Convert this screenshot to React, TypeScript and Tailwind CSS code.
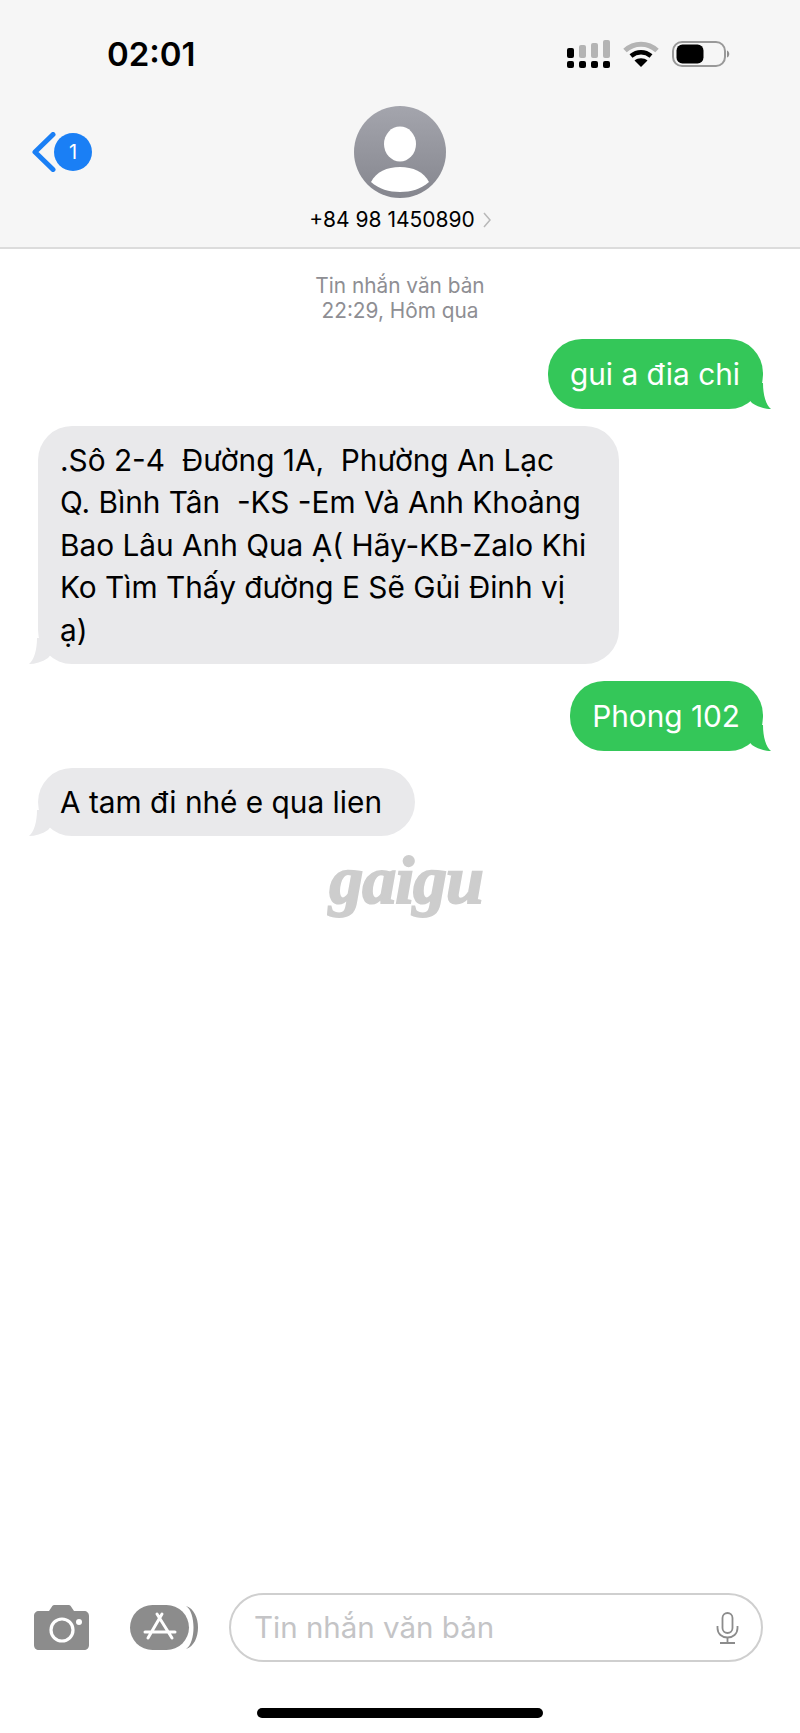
const FONT = "font-['Inter','Liberation_Sans',sans-serif]";

function SignalIcon() {
  return (
    <svg width="43" height="28" viewBox="0 0 43 28">
      <rect x="0" y="8" width="7" height="10" rx="2" fill="#000" />
      <rect x="12" y="5" width="7" height="13" rx="2" fill="#b4b4b4" />
      <rect x="24" y="3" width="7" height="15" rx="2" fill="#b4b4b4" />
      <rect x="36" y="0" width="7" height="18" rx="2" fill="#b4b4b4" />
      <rect x="0" y="21" width="7" height="7" rx="2" fill="#000" />
      <rect x="12" y="21" width="7" height="7" rx="2" fill="#000" />
      <rect x="24" y="21" width="7" height="7" rx="2" fill="#000" />
      <rect x="36" y="21" width="7" height="7" rx="2" fill="#000" />
    </svg>
  );
}

function WifiIcon() {
  return (
    <svg width="36" height="26" viewBox="0 0 36 26" fill="none" strokeLinecap="butt">
      <path d="M2 9.500C11 1 25 1 34 9.500" stroke="#b4b4b4" strokeWidth="5" />
      <path d="M8 15C14 10 22 10 28 15" stroke="#000" strokeWidth="4.500" />
      <path d="M18 26L11.500 19.500C15 16.500 21 16.500 24.500 19.500Z" fill="#000" />
    </svg>
  );
}

function BatteryIcon() {
  return (
    <svg width="58" height="26" viewBox="0 0 58 26">
      <rect x="1" y="1" width="52" height="24" rx="9" fill="none" stroke="#999999" strokeWidth="2" />
      <rect x="4.500" y="3.500" width="27" height="19" rx="6" fill="#000" />
      <path d="M55 9.500C58 10.500 58 15.500 55 16.500Z" fill="#8f8f8f" />
    </svg>
  );
}

function PersonAvatar() {
  return (
    <svg width="92" height="92" viewBox="0 0 92 92">
      <defs>
        <linearGradient id="avatar" x1="0" y1="0" x2="0" y2="1">
          <stop offset="0" stopColor="#a4a5ad" />
          <stop offset="1" stopColor="#85868e" />
        </linearGradient>
      </defs>
      <circle cx="46" cy="46" r="46" fill="url(#avatar)" />
      <ellipse cx="46" cy="38" rx="16" ry="17.500" fill="#fff" />
      <path d="M17 76C22 66 33 61 46 61C59 61 70 66 75 76C67 83 57 86 46 86C35 86 25 83 17 76Z" fill="#fff" />
    </svg>
  );
}

function CameraIcon() {
  return (
    <svg width="55" height="45" viewBox="0 0 55 45">
      <path
        d="M5 6H15L18 1.500C18.500 .5 19.500 0 20.500 0H34.500C35.500 0 36.500 .5 37 1.500L40 6H50C53 6 55 8 55 11V40C55 43 53 45 50 45H5C2 45 0 43 0 40V11C0 8 2 6 5 6Z"
        fill="#8c8c8c"
      />
      <circle cx="28" cy="25" r="11" fill="none" stroke="#fff" strokeWidth="3.200" />
      <circle cx="45" cy="17" r="3" fill="#fff" />
    </svg>
  );
}

function AppsIcon() {
  return (
    <svg width="68" height="45" viewBox="0 0 68 45" fill="none">
      <path d="M56 1C72 6 72 39 56 44C66 38 66 7 56 1Z" fill="#8c8c8c" />
      <rect x="0" y="0" width="59" height="45" rx="22.500" fill="#8c8c8c" />
      <path d="M27 9L42 33M32 9L18 33M15 27H45" stroke="#fff" strokeWidth="3" strokeLinecap="round" />
    </svg>
  );
}

function MicIcon() {
  return (
    <svg width="23" height="32" viewBox="0 0 23 32" fill="none" stroke="#8c8c8c" strokeWidth="1.800">
      <rect x="6.500" y="1" width="10" height="20" rx="5" />
      <path d="M1.500 14V16C1.500 22 6 25.500 11.500 25.500C17 25.500 21.500 22 21.500 16V14" />
      <path d="M11.500 25.500V31M4 31H19" />
    </svg>
  );
}

function Tail({ side, color }: { side: 'left' | 'right'; color: string }) {
  const place = side === 'right' ? 'right-[-8px]' : 'left-[-9px] -scale-x-100';
  return (
    <svg className={`absolute bottom-0 ${place}`} width="30" height="26" viewBox="0 0 30 26">
      <path d="M6 0L22 0C22 12 25 22 30 26C24 26 17 24 11 20L6 14Z" fill={color} />
    </svg>
  );
}

function Sent({ text }: { text: string }) {
  return (
    <div className="relative self-end bg-[#34c759] text-white rounded-[34px] pl-[22px] pr-[23px] py-[13.5px] text-[29.8px] leading-[42.5px]">
      {text}
      <Tail side="right" color="#34c759" />
    </div>
  );
}

function Received({ lines }: { lines: string[] }) {
  return (
    <div className="relative self-start bg-[#e9e9eb] text-black rounded-[34px] pl-[22px] pr-[33px] py-[13px] text-[29.8px] leading-[42.5px]">
      {lines.map((line) => (
        <div key={line} className="whitespace-pre">
          {line}
        </div>
      ))}
      <Tail side="left" color="#e9e9eb" />
    </div>
  );
}

export default function App() {
  return (
    <div className={`${FONT} flex flex-col h-[1733px] w-[800px] bg-white overflow-hidden`}>
      {/* header */}
      <div className="bg-[#f6f6f6] border-b-2 border-[#dcdcdc] h-[249px]">
        <div className="flex items-center justify-between pt-[40px] pl-[107px] pr-[70px] h-[68px]">
          <span className="text-[33px] font-semibold text-black leading-[28px]">02:01</span>
          <div className="flex items-center gap-[13px]">
            <SignalIcon />
            <WifiIcon />
            <BatteryIcon />
          </div>
        </div>
        <div className="grid grid-cols-[1fr_auto_1fr] mt-[38px]">
          <div className="flex items-center pl-[31px] h-[92px]">
            <svg width="25" height="40" viewBox="0 0 25 40" fill="none" className="mr-[-2px]">
              <path d="M22 2.500L4 20L22 37.500" stroke="#1a7ff5" strokeWidth="5" strokeLinecap="round" strokeLinejoin="round" />
            </svg>
            <div className="w-[38px] h-[38px] rounded-full bg-[#1a7ff5] text-white text-[20px] flex items-center justify-center">
              1
            </div>
          </div>
          <div className="flex flex-col items-center">
            <PersonAvatar />
            <div className="flex items-center gap-[8px] mt-[10px]">
              <span className="text-[21px] leading-[24px] text-black">+84 98 1450890</span>
              <svg width="8" height="16" viewBox="0 0 8 16" fill="none">
                <path d="M1 1L7 8L1 15" stroke="#b8b8b8" strokeWidth="1.500" />
              </svg>
            </div>
          </div>
          <div />
        </div>
      </div>

      {/* messages */}
      <div className="text-center text-[20.8px] leading-[25px] text-[#8e8e93] pt-[24px]">
        <div>Tin nhắn văn bản</div>
        <div>22:29, Hôm qua</div>
      </div>
      <div className="flex flex-col gap-[17px] pl-[38px] pr-[37px] mt-[16px]">
        <Sent text="gui a đia chi" />
        <Received
          lines={[
            '.Sô 2-4  Đường 1A,  Phường An Lạc',
            'Q. Bình Tân  -KS -Em Và Anh Khoảng',
            'Bao Lâu Anh Qua Ạ( Hãy-KB-Zalo Khi',
            'Ko Tìm Thấy đường E Sẽ Gủi Đinh vị',
            'ạ)',
          ]}
        />
        <Sent text="Phong 102" />
        <Received lines={['A tam đi nhé e qua lien']} />
      </div>

      {/* watermark */}
      <div className="text-center font-['Liberation_Serif',serif] italic font-bold text-[68px] leading-[68px] tracking-[-1px] text-[#cdcdcd] [-webkit-text-stroke:2px_#cdcdcd] mt-[10px] pl-[12px]">
        gaigu
      </div>

      {/* composer */}
      <div className="mt-auto flex items-center pl-[34px] pr-[37px]">
        <CameraIcon />
        <div className="ml-[41px]">
          <AppsIcon />
        </div>
        <div className="ml-[31px] flex-1 h-[69px] rounded-[35px] border-2 border-[#cfcfcf] flex items-center justify-between pl-[23px] pr-[22px]">
          <span className="text-[29.5px] text-[#c4c4c6]">Tin nhắn văn bản</span>
          <MicIcon />
        </div>
      </div>
      <div className="flex justify-center mt-[46px] mb-[15px]">
        <div className="w-[286px] h-[10px] rounded-full bg-black" />
      </div>
    </div>
  );
}
